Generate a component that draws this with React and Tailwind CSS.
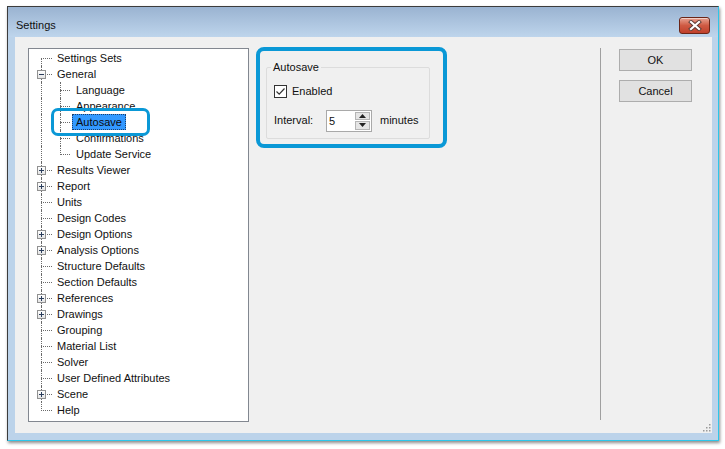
import React from 'react';

const items = [
  { t: 'Settings Sets', first: true },
  { t: 'General', exp: 'minus' },
  { t: 'Language', child: true },
  { t: 'Appearance', child: true },
  { t: 'Autosave', child: true, sel: true },
  { t: 'Confirmations', child: true },
  { t: 'Update Service', child: true, lastChild: true },
  { t: 'Results Viewer', exp: 'plus' },
  { t: 'Report', exp: 'plus' },
  { t: 'Units' },
  { t: 'Design Codes' },
  { t: 'Design Options', exp: 'plus' },
  { t: 'Analysis Options', exp: 'plus' },
  { t: 'Structure Defaults' },
  { t: 'Section Defaults' },
  { t: 'References', exp: 'plus' },
  { t: 'Drawings', exp: 'plus' },
  { t: 'Grouping' },
  { t: 'Material List' },
  { t: 'Solver' },
  { t: 'User Defined Attributes' },
  { t: 'Scene', exp: 'plus' },
  { t: 'Help', last: true },
];

function ExpandBox({ kind }) {
  return (
    <span className="absolute left-[8px] top-[4px] w-[9px] h-[9px] border border-[#919191] bg-gradient-to-b from-white to-[#e4e4e4]">
      <span className="absolute left-[1px] top-[3px] w-[5px] h-px bg-[#2a3d5c]" />
      {kind === 'plus' && <span className="absolute left-[3px] top-[1px] w-px h-[5px] bg-[#2a3d5c]" />}
    </span>
  );
}

function TreeRow({ item }) {
  const rootV = item.first
    ? 'absolute left-[12px] top-[8px] bottom-0 border-l border-dotted border-[#6a6a6a]'
    : item.last
    ? 'absolute left-[12px] top-0 h-[9px] border-l border-dotted border-[#6a6a6a]'
    : 'absolute left-[12px] top-0 bottom-0 border-l border-dotted border-[#6a6a6a]';

  return (
    <div className="relative h-4 flex items-center">
      <span className={rootV} />
      {!item.child && (
        <span className="absolute left-[12px] top-[8px] w-[11px] border-t border-dotted border-[#6a6a6a]" />
      )}
      {item.child && (
        <>
          <span
            className={
              item.lastChild
                ? 'absolute left-[31px] top-0 h-[9px] border-l border-dotted border-[#6a6a6a]'
                : 'absolute left-[31px] top-0 bottom-0 border-l border-dotted border-[#6a6a6a]'
            }
          />
          <span className="absolute left-[31px] top-[8px] w-[10px] border-t border-dotted border-[#6a6a6a]" />
        </>
      )}
      {item.exp && <ExpandBox kind={item.exp} />}
      <span
        className={
          (item.child ? 'ml-[43px] ' : 'ml-[24px] ') +
          (item.sel
            ? 'h-4 leading-[16px] px-[4px] bg-[#3399ff] text-[#0b0b0b] outline-1 outline-dotted -outline-offset-1 outline-[#1d3f6b]'
            : 'h-4 leading-[16px] px-[4px] text-[#111]')
        }
      >
        {item.t}
      </span>
    </div>
  );
}

function CloseButton() {
  return (
    <div className="w-[31px] h-[17px] rounded-[3px] border border-[#6b2618] bg-gradient-to-b from-[#e6a191] via-[#cf5a43] to-[#c0402b] flex items-center justify-center shadow-[inset_0_1px_0_rgba(255,255,255,0.5)]">
      <svg width="14" height="11" viewBox="0 0 14 11">
        <path d="M3 2 L11 9 M11 2 L3 9" stroke="#5b3a35" strokeWidth="4" strokeLinecap="square" />
        <path d="M3 2 L11 9 M11 2 L3 9" stroke="#ffffff" strokeWidth="2.2" strokeLinecap="square" />
      </svg>
    </div>
  );
}

function Button({ children }) {
  return (
    <div className="w-[73px] h-[22px] border border-[#adadad] bg-[#e1e1e1] flex items-center justify-center text-[#111]">
      {children}
    </div>
  );
}

export default function App() {
  return (
    <div className="w-[725px] h-[449px] bg-white pt-[6px] pl-[7px] font-['Liberation_Sans',Arial,sans-serif] text-[11px]">
      <div className="w-[712px] h-[435px] border-l border-t border-[#3c3c3c] border-r border-b border-r-[#2cc6ea] border-b-[#2cc6ea] bg-[#bcd3ea] flex flex-col shadow-[1px_2px_3px_rgba(0,0,0,0.45)]">
        {/* title bar */}
        <div className="h-[30px] flex items-center justify-between pt-[6px] pl-[8px] pr-[8px] bg-gradient-to-b from-[#9ab3d1] to-[#bed5ec]">
          <span className="text-[#111] text-[11px] mt-[1px]">Settings</span>
          <CloseButton />
        </div>

        {/* client area */}
        <div className="relative flex-1 mx-[7px] mr-[6px] mb-[7px] bg-[#f0f0f0] flex items-start pt-[11px] pl-[13px]">
          {/* tree */}
          <div className="w-[221px] h-[374px] border border-[#828790] bg-white pt-[1px]">
            {items.map((it) => (
              <TreeRow key={it.t} item={it} />
            ))}
          </div>

          {/* page */}
          <div className="w-[351px] h-[374px] pl-[17px] pt-[11px]">
            <fieldset className="w-[164px] h-[80px] border border-[#dcdcdc] rounded-[2px] pl-[7px]">
              <legend className="ml-[-3px] px-[2px] leading-[16px] text-[#111]">Autosave</legend>
              <div className="flex items-center mt-[8px]">
                <span className="w-[13px] h-[13px] border border-[#333] bg-white flex items-center justify-center">
                  <svg width="11" height="11" viewBox="0 0 11 11">
                    <path d="M1.5 5.5 L4.2 8.2 L9.5 2.5" fill="none" stroke="#333" strokeWidth="1.2" />
                  </svg>
                </span>
                <span className="ml-[5px] text-[#111]">Enabled</span>
              </div>
              <div className="flex items-center mt-[10px]">
                <span className="w-[52px] text-[#111]">Interval:</span>
                <div className="w-[46px] h-[22px] border border-[#a9a9a9] bg-white flex items-stretch">
                  <span className="flex-1 pl-[2px] leading-[20px] text-[#111]">5</span>
                  <div className="w-[15px] my-[1px] mr-[1px] flex flex-col gap-px">
                    <div className="flex-1 bg-[#e5e5e5] border border-[#b5b5b5] flex items-center justify-center">
                      <svg width="7" height="4" viewBox="0 0 7 4">
                        <path d="M0 4 L3.5 0 L7 4 Z" fill="#222" />
                      </svg>
                    </div>
                    <div className="flex-1 bg-[#e5e5e5] border border-[#b5b5b5] flex items-center justify-center">
                      <svg width="7" height="4" viewBox="0 0 7 4">
                        <path d="M0 0 L7 0 L3.5 4 Z" fill="#222" />
                      </svg>
                    </div>
                  </div>
                </div>
                <span className="ml-[8px] text-[#111]">minutes</span>
              </div>
            </fieldset>
          </div>

          {/* separator */}
          <div className="w-px h-[372px] bg-[#a0a0a0]" />

          {/* buttons */}
          <div className="ml-[18px] mt-[1px] flex flex-col gap-[9px]">
            <Button>OK</Button>
            <Button>Cancel</Button>
          </div>

          {/* size grip */}
          <svg className="absolute right-[1px] bottom-[1px]" width="9" height="9" viewBox="0 0 9 9">
            <rect x="7" y="1" width="1.5" height="1.5" fill="#9a9a9a" />
            <rect x="4" y="4" width="1.5" height="1.5" fill="#9a9a9a" />
            <rect x="7" y="4" width="1.5" height="1.5" fill="#9a9a9a" />
            <rect x="1" y="7" width="1.5" height="1.5" fill="#9a9a9a" />
            <rect x="4" y="7" width="1.5" height="1.5" fill="#9a9a9a" />
            <rect x="7" y="7" width="1.5" height="1.5" fill="#9a9a9a" />
          </svg>

          {/* highlight callouts */}
          <div className="absolute left-[36px] top-[71px] w-[99px] h-[28px] border-[3px] border-[#0a98d6] rounded-[7px]" />
          <div className="absolute left-[241px] top-[10px] w-[191px] h-[101px] border-[4px] border-[#0a98d6] rounded-[8px]" />
        </div>
      </div>
    </div>
  );
}
